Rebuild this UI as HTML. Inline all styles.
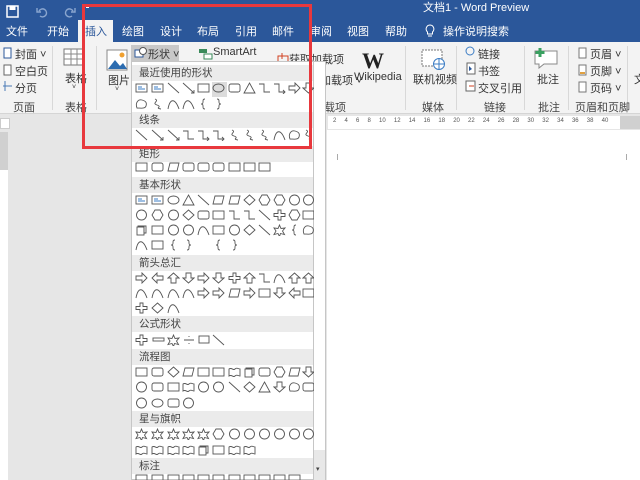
<!DOCTYPE html>
<html><head><meta charset="utf-8"><style>
*{margin:0;padding:0;box-sizing:border-box}
body{width:640px;height:480px;overflow:hidden;position:relative;background:#e6e6e6;font-family:"Liberation Sans","Noto Sans CJK SC",sans-serif;font-size:11px;color:#333}
.a{position:absolute;white-space:nowrap}
#title{left:0;top:0;width:640px;height:42px;background:#2b579a}
.tab{position:absolute;top:23px;color:#fff;font-size:11px}
#rib{left:0;top:42px;width:640px;height:72px;background:#f3f3f3;border-bottom:1px solid #d5d5d5}
.sep{position:absolute;top:46px;width:1px;height:64px;background:#d8d8d8}
.gl{position:absolute;top:99px;font-size:11px;color:#444}
.t{font-size:11px;color:#333}
#page{left:327px;top:130px;width:313px;height:350px;background:#fff}
#panel{left:131px;top:61px;width:183px;height:419px;background:#fff;border:1px solid #c6c6c6}
.hd{position:absolute;left:0;width:181px;height:16px;background:#ebebeb;font-size:10.5px;padding-left:7px;line-height:16px;color:#444}
#red{left:82px;top:4px;width:230px;height:145px;border:3px solid #e8383d}
</style></head><body>
<div class="a" id="title"></div>
<svg class="a" style="left:6px;top:5px" width="80" height="14"><rect x="1" y="1" width="11" height="11" fill="none" stroke="#fff" stroke-width="1.5"/><rect x="3.5" y="1" width="6" height="4" fill="#fff"/><path d="M33 6a4 4 0 1 1 1 5M31 3v4h4" fill="none" stroke="#8aa6cf" stroke-width="1.4"/><path d="M67 6a4 4 0 1 0 -1 5M69 3v4h-4" fill="none" stroke="#8aa6cf" stroke-width="1.4"/></svg>
<div class="a" style="left:86px;top:5px;width:3px;height:3px;background:#fff"></div>
<div class="a" style="left:423px;top:1px;color:#fff;font-size:11px;line-height:14px">文档1 - Word Preview</div>
<div class="a" style="left:78px;top:20px;width:35px;height:23px;background:#f3f3f3"></div>
<span class="tab" style="left:6px">文件</span><span class="tab" style="left:47px">开始</span><span class="tab" style="left:85px;color:#2b579a">插入</span><span class="tab" style="left:122px">绘图</span><span class="tab" style="left:160px">设计</span><span class="tab" style="left:197px">布局</span><span class="tab" style="left:235px">引用</span><span class="tab" style="left:272px">邮件</span><span class="tab" style="left:310px">审阅</span><span class="tab" style="left:347px">视图</span><span class="tab" style="left:385px">帮助</span>
<svg class="a" style="left:425px;top:24px" width="10" height="14"><path d="M5 1a4 4 0 0 0-2.5 7v2h5V8A4 4 0 0 0 5 1zM3 12h4" fill="none" stroke="#fff"/></svg>
<span class="tab" style="left:443px">操作说明搜索</span>
<div class="a" id="rib"></div>
<div class="sep" style="left:52px"></div><div class="sep" style="left:96px"></div><div class="sep" style="left:405px"></div><div class="sep" style="left:456px"></div><div class="sep" style="left:524px"></div><div class="sep" style="left:568px"></div><div class="sep" style="left:627px"></div>
<svg class="a" style="left:3px;top:47px" width="10" height="50"><rect x="1" y="1" width="7" height="10" fill="#fff" stroke="#2b579a"/><rect x="1" y="18" width="7" height="10" fill="#fff" stroke="#666"/><path d="M0 39h9M2 34v10" stroke="#4a7ab5"/></svg>
<span class="a t" style="left:15px;top:46px">封面 ˅</span><span class="a t" style="left:15px;top:63px">空白页</span><span class="a t" style="left:15px;top:80px">分页</span>
<span class="gl" style="left:13px">页面</span>
<svg class="a" style="left:63px;top:48px" width="22" height="18"><rect x="1" y="1" width="20" height="16" fill="#fff" stroke="#777"/><path d="M1 6h20M1 11h20M8 1v16M14 1v16" stroke="#888"/></svg>
<span class="a t" style="left:65px;top:70px">表格</span><span class="a" style="left:72px;top:84px;font-size:7px">˅</span><span class="gl" style="left:65px">表格</span>
<svg class="a" style="left:106px;top:49px" width="22" height="22"><rect x="1" y="1" width="20" height="20" fill="#fff" stroke="#888"/><path d="M2 20L9 11l5 6 3-3 4 6z" fill="#2b6cb0"/><circle cx="16" cy="6" r="2.5" fill="#f0a030"/></svg>
<span class="a t" style="left:108px;top:72px">图片</span><span class="a" style="left:115px;top:86px;font-size:7px">˅</span>
<div class="a" style="left:131px;top:45px;width:48px;height:16px;background:#c8c8c8"></div>
<svg class="a" style="left:134px;top:46px" width="14" height="13"><rect x="1" y="4" width="8" height="7" fill="#fff" stroke="#2b579a"/><circle cx="9" cy="5" r="3.5" fill="#fff" stroke="#555"/></svg>
<span class="a t" style="left:148px;top:46px">形状 ˅</span>
<svg class="a" style="left:199px;top:48px" width="14" height="12"><rect x="0" y="1" width="8" height="4" fill="#3a8a5a"/><rect x="5" y="6" width="8" height="5" fill="#fff" stroke="#3a8a5a"/></svg>
<span class="a t" style="left:213px;top:46px">SmartArt</span>
<svg class="a" style="left:277px;top:53px" width="12" height="12"><path d="M1 3h10v8H1zM5 0v6M2 3h6" fill="none" stroke="#d04020"/></svg>
<span class="a t" style="left:289px;top:51px">获取加载项</span><span class="a t" style="left:298px;top:72px">我的加载项 ˅</span>
<span class="gl" style="left:313px">加载项</span>
<div class="a" style="left:362px;top:48px;font-family:'Liberation Serif',serif;font-size:22px;font-weight:bold;color:#222">W</div>
<span class="a t" style="left:354px;top:71px">Wikipedia</span>
<svg class="a" style="left:421px;top:49px" width="26" height="22"><rect x="1" y="1" width="20" height="16" fill="#fff" stroke="#777" stroke-dasharray="2 1"/><circle cx="18" cy="15" r="5.5" fill="#fff" stroke="#3b7cc4"/><path d="M12.5 15h11M18 9.5v11" stroke="#3b7cc4"/></svg>
<span class="a t" style="left:413px;top:71px">联机视频</span><span class="gl" style="left:422px">媒体</span>
<svg class="a" style="left:465px;top:46px" width="12" height="50"><circle cx="5" cy="5" r="4" fill="none" stroke="#3b7cc4"/><rect x="2" y="17" width="8" height="11" fill="#fff" stroke="#666"/><path d="M4 20v5l3-2z" fill="#2b579a"/><rect x="1" y="35" width="9" height="10" fill="#fff" stroke="#666"/><path d="M4 40h5" stroke="#d04020"/></svg>
<span class="a t" style="left:478px;top:46px">链接</span><span class="a t" style="left:478px;top:63px">书签</span><span class="a t" style="left:478px;top:80px">交叉引用</span>
<span class="gl" style="left:484px">链接</span>
<svg class="a" style="left:534px;top:47px" width="24" height="22"><path d="M1 4h22v13H10l-5 4v-4H1z" fill="#fff" stroke="#888"/><path d="M6 1v9M1.5 5.5h9" stroke="#3aa060" stroke-width="3"/></svg>
<span class="a t" style="left:537px;top:71px">批注</span><span class="gl" style="left:538px">批注</span>
<svg class="a" style="left:578px;top:47px" width="10" height="48"><rect x="1" y="1" width="7" height="10" fill="#fff" stroke="#777"/><rect x="1" y="18" width="7" height="10" fill="#fff" stroke="#777"/><path d="M2 26h5" stroke="#e0a040" stroke-width="2"/><rect x="1" y="35" width="7" height="10" fill="#fff" stroke="#777"/></svg>
<span class="a t" style="left:590px;top:46px">页眉 ˅</span><span class="a t" style="left:590px;top:63px">页脚 ˅</span><span class="a t" style="left:590px;top:80px">页码 ˅</span>
<span class="gl" style="left:575px">页眉和页脚</span>
<span class="a t" style="left:634px;top:71px">文</span>
<!-- ruler -->
<div class="a" style="left:0;top:118px;width:10px;height:11px;background:#fff;border:1px solid #ccc"></div>
<div class="a" style="left:0;top:132px;width:8px;height:38px;background:#d0d0d0"></div>
<div class="a" style="left:0;top:170px;width:8px;height:310px;background:#fff"></div>
<div class="a" style="left:328px;top:116px;width:312px;height:13px;background:#fff"></div>
<div class="a" style="left:620px;top:116px;width:20px;height:13px;background:#d0d0d0"></div>
<div class="a" style="left:333px;top:118px;font-size:6px;color:#555;word-spacing:6.5px">2 4 6 8 10 12 14 16 18 20 22 24 26 28 30 32 34 36 38 40</div>
<div class="a" id="page"></div>
<div class="a" style="left:337px;top:154px;width:1px;height:6px;background:#aaa"></div>
<div class="a" style="left:626px;top:154px;width:1px;height:6px;background:#aaa"></div>
<!-- panel -->
<div class="a" id="panel">
<div class="hd" style="top:3px">最近使用的形状</div>
<div class="hd" style="top:50px">线条</div>
<div class="hd" style="top:84px">矩形</div>
<div class="hd" style="top:115px">基本形状</div>
<div class="hd" style="top:193px">箭头总汇</div>
<div class="hd" style="top:254px">公式形状</div>
<div class="hd" style="top:287px">流程图</div>
<div class="hd" style="top:349px">星与旗帜</div>
<div class="hd" style="top:396px">标注</div>
<div class="a" style="left:80px;top:20px;width:15px;height:15px;background:#dcdcdc"></div>
</div>
<div class="a" style="left:313px;top:61px;width:13px;height:419px;background:#fff;border:1px solid #c6c6c6"></div>
<div class="a" style="left:314px;top:450px;width:11px;height:30px;background:#e8e8e8"></div>
<div class="a" style="left:316px;top:465px;font-size:7px;color:#444">▾</div>
<svg class="a" style="left:131px;top:61px" width="183" height="419" fill="none" stroke="#555" stroke-width="0.9">
<defs>
<symbol id="R" viewBox="0 0 13 12"><rect x="1" y="2" width="11" height="8"/></symbol>
<symbol id="RR" viewBox="0 0 13 12"><rect x="1" y="2" width="11" height="8" rx="2"/></symbol>
<symbol id="E" viewBox="0 0 13 12"><ellipse cx="6.5" cy="6" rx="5.5" ry="4"/></symbol>
<symbol id="C" viewBox="0 0 13 12"><circle cx="6.5" cy="6" r="5"/></symbol>
<symbol id="T" viewBox="0 0 13 12"><path d="M6.5 1L12 11H1z"/></symbol>
<symbol id="L" viewBox="0 0 13 12"><path d="M1 1L12 11"/></symbol>
<symbol id="LA" viewBox="0 0 13 12"><path d="M1 1L12 11M9 11h3V8"/></symbol>
<symbol id="EL" viewBox="0 0 13 12"><path d="M1 2h5v8h6"/></symbol>
<symbol id="ELA" viewBox="0 0 13 12"><path d="M1 2h5v8h6M10 8l2 2-2 2"/></symbol>
<symbol id="AR" viewBox="0 0 13 12"><path d="M1 4h6V1l5 5-5 5V8H1z"/></symbol>
<symbol id="AL" viewBox="0 0 13 12"><path d="M12 4H6V1L1 6l5 5V8h6z"/></symbol>
<symbol id="AU" viewBox="0 0 13 12"><path d="M4 11V6H1l5.5-5L12 6H9v5z"/></symbol>
<symbol id="AD" viewBox="0 0 13 12"><path d="M4 1v5H1l5.5 5L12 6H9V1z"/></symbol>
<symbol id="D" viewBox="0 0 13 12"><path d="M6.5 1L12 6 6.5 11 1 6z"/></symbol>
<symbol id="H" viewBox="0 0 13 12"><path d="M4 1h5l3 5-3 5H4L1 6z"/></symbol>
<symbol id="P" viewBox="0 0 13 12"><path d="M3 2h9L10 10H1z"/></symbol>
<symbol id="TB" viewBox="0 0 13 12"><rect x="1" y="2" width="11" height="8"/><path d="M3 5h4M3 7h7" stroke="#3b7cc4"/></symbol>
<symbol id="BR" viewBox="0 0 13 12"><path d="M8 1c-2 0-2 1-2 3S5 6 4 6c1 0 2 0 2 2s0 3 2 3"/></symbol>
<symbol id="BR2" viewBox="0 0 13 12"><path d="M5 1c2 0 2 1 2 3s1 2 2 2c-1 0-2 0-2 2s0 3-2 3"/></symbol>
<symbol id="CV" viewBox="0 0 13 12"><path d="M1 11C3 0 8 0 12 11"/></symbol>
<symbol id="ZZ" viewBox="0 0 13 12"><path d="M4 1c5 2-4 4 2 6s-3 3 4 4"/></symbol>
<symbol id="FR" viewBox="0 0 13 12"><path d="M2 10C0 5 3 1 7 2s5 3 4 6-5 2-9 2z"/></symbol>
<symbol id="ST" viewBox="0 0 13 12"><path d="M6.5 1l1.5 3.5 4-.5-2.5 3 2 3.5-4-1-1 3-1.5-3-4 1 2-3.5L1 4l4 .5z"/></symbol>
<symbol id="PL" viewBox="0 0 13 12"><path d="M5 1h3v3.5h4v3H8V11H5V7.5H1v-3h4z"/></symbol>
<symbol id="FL" viewBox="0 0 13 12"><path d="M1 3c3-2 4 2 6 0s3 0 5 0v7c-2 0-3-2-5 0s-3-2-6 0z"/></symbol>
<symbol id="CU" viewBox="0 0 13 12"><path d="M3 2h8v7H9V3H3z"/><rect x="2" y="3" width="7" height="8"/></symbol>
<symbol id="CL" viewBox="0 0 13 12"><rect x="1" y="1" width="11" height="7"/><path d="M3 8l-1 3 4-3"/></symbol>
</defs>
<use href="#TB" x="4" y="21" width="13" height="12"/><use href="#TB" x="20" y="21" width="13" height="12"/><use href="#L" x="36" y="21" width="13" height="12"/><use href="#LA" x="51" y="21" width="13" height="12"/><use href="#R" x="66" y="21" width="13" height="12"/><use href="#E" x="81" y="21" width="13" height="12"/><use href="#RR" x="97" y="21" width="13" height="12"/><use href="#T" x="112" y="21" width="13" height="12"/><use href="#EL" x="127" y="21" width="13" height="12"/><use href="#ELA" x="142" y="21" width="13" height="12"/><use href="#AR" x="157" y="21" width="13" height="12"/><use href="#AD" x="171" y="21" width="13" height="12"/>
<use href="#FR" x="4" y="37" width="13" height="12"/><use href="#ZZ" x="20" y="37" width="13" height="12"/><use href="#CV" x="36" y="37" width="13" height="12"/><use href="#CV" x="51" y="37" width="13" height="12"/><use href="#BR" x="66" y="37" width="13" height="12"/><use href="#BR2" x="81" y="37" width="13" height="12"/>
<use href="#L" x="4" y="68" width="13" height="12"/><use href="#LA" x="20" y="68" width="13" height="12"/><use href="#LA" x="36" y="68" width="13" height="12"/><use href="#EL" x="51" y="68" width="13" height="12"/><use href="#ELA" x="66" y="68" width="13" height="12"/><use href="#ELA" x="81" y="68" width="13" height="12"/><use href="#ZZ" x="97" y="68" width="13" height="12"/><use href="#ZZ" x="112" y="68" width="13" height="12"/><use href="#ZZ" x="127" y="68" width="13" height="12"/><use href="#CV" x="142" y="68" width="13" height="12"/><use href="#FR" x="157" y="68" width="13" height="12"/><use href="#ZZ" x="171" y="68" width="13" height="12"/>
<use href="#R" x="4" y="100" width="13" height="12"/><use href="#RR" x="20" y="100" width="13" height="12"/><use href="#P" x="36" y="100" width="13" height="12"/><use href="#RR" x="51" y="100" width="13" height="12"/><use href="#RR" x="66" y="100" width="13" height="12"/><use href="#RR" x="81" y="100" width="13" height="12"/><use href="#R" x="97" y="100" width="13" height="12"/><use href="#R" x="112" y="100" width="13" height="12"/><use href="#R" x="127" y="100" width="13" height="12"/>
<use href="#TB" x="4" y="133" width="13" height="12"/><use href="#TB" x="20" y="133" width="13" height="12"/><use href="#E" x="36" y="133" width="13" height="12"/><use href="#T" x="51" y="133" width="13" height="12"/><use href="#L" x="66" y="133" width="13" height="12"/><use href="#P" x="81" y="133" width="13" height="12"/><use href="#P" x="97" y="133" width="13" height="12"/><use href="#D" x="112" y="133" width="13" height="12"/><use href="#H" x="127" y="133" width="13" height="12"/><use href="#H" x="142" y="133" width="13" height="12"/><use href="#C" x="157" y="133" width="13" height="12"/><use href="#C" x="171" y="133" width="13" height="12"/>
<use href="#C" x="4" y="148" width="13" height="12"/><use href="#H" x="20" y="148" width="13" height="12"/><use href="#C" x="36" y="148" width="13" height="12"/><use href="#D" x="51" y="148" width="13" height="12"/><use href="#RR" x="66" y="148" width="13" height="12"/><use href="#R" x="81" y="148" width="13" height="12"/><use href="#EL" x="97" y="148" width="13" height="12"/><use href="#EL" x="112" y="148" width="13" height="12"/><use href="#L" x="127" y="148" width="13" height="12"/><use href="#PL" x="142" y="148" width="13" height="12"/><use href="#H" x="157" y="148" width="13" height="12"/><use href="#R" x="171" y="148" width="13" height="12"/>
<use href="#CU" x="4" y="163" width="13" height="12"/><use href="#R" x="20" y="163" width="13" height="12"/><use href="#C" x="36" y="163" width="13" height="12"/><use href="#C" x="51" y="163" width="13" height="12"/><use href="#CV" x="66" y="163" width="13" height="12"/><use href="#R" x="81" y="163" width="13" height="12"/><use href="#C" x="97" y="163" width="13" height="12"/><use href="#D" x="112" y="163" width="13" height="12"/><use href="#L" x="127" y="163" width="13" height="12"/><use href="#ST" x="142" y="163" width="13" height="12"/><use href="#BR" x="157" y="163" width="13" height="12"/><use href="#FR" x="171" y="163" width="13" height="12"/>
<use href="#CV" x="4" y="178" width="13" height="12"/><use href="#R" x="20" y="178" width="13" height="12"/><use href="#BR" x="36" y="178" width="13" height="12"/><use href="#BR2" x="51" y="178" width="13" height="12"/><use href="#BR" x="81" y="178" width="13" height="12"/><use href="#BR2" x="97" y="178" width="13" height="12"/>
<use href="#AR" x="4" y="211" width="13" height="12"/><use href="#AL" x="20" y="211" width="13" height="12"/><use href="#AU" x="36" y="211" width="13" height="12"/><use href="#AD" x="51" y="211" width="13" height="12"/><use href="#AR" x="66" y="211" width="13" height="12"/><use href="#AD" x="81" y="211" width="13" height="12"/><use href="#PL" x="97" y="211" width="13" height="12"/><use href="#AU" x="112" y="211" width="13" height="12"/><use href="#EL" x="127" y="211" width="13" height="12"/><use href="#CV" x="142" y="211" width="13" height="12"/><use href="#AU" x="157" y="211" width="13" height="12"/><use href="#AU" x="171" y="211" width="13" height="12"/>
<use href="#CV" x="4" y="226" width="13" height="12"/><use href="#CV" x="20" y="226" width="13" height="12"/><use href="#CV" x="36" y="226" width="13" height="12"/><use href="#CV" x="51" y="226" width="13" height="12"/><use href="#AR" x="66" y="226" width="13" height="12"/><use href="#AR" x="81" y="226" width="13" height="12"/><use href="#P" x="97" y="226" width="13" height="12"/><use href="#AR" x="112" y="226" width="13" height="12"/><use href="#R" x="127" y="226" width="13" height="12"/><use href="#AD" x="142" y="226" width="13" height="12"/><use href="#AL" x="157" y="226" width="13" height="12"/><use href="#R" x="171" y="226" width="13" height="12"/>
<use href="#PL" x="4" y="241" width="13" height="12"/><use href="#D" x="20" y="241" width="13" height="12"/><use href="#CV" x="36" y="241" width="13" height="12"/>
<use href="#PL" x="4" y="273" width="13" height="12"/><rect x="22" y="277" width="11" height="3"/><use href="#ST" x="36" y="273" width="13" height="12"/><path d="M53 279h10M58 275v1M58 282v1"/><rect x="68" y="275" width="10" height="7"/><use href="#L" x="81" y="273" width="13" height="12"/>
<use href="#R" x="4" y="305" width="13" height="12"/><use href="#RR" x="20" y="305" width="13" height="12"/><use href="#D" x="36" y="305" width="13" height="12"/><use href="#P" x="51" y="305" width="13" height="12"/><use href="#R" x="66" y="305" width="13" height="12"/><use href="#R" x="81" y="305" width="13" height="12"/><use href="#FL" x="97" y="305" width="13" height="12"/><use href="#CU" x="112" y="305" width="13" height="12"/><use href="#RR" x="127" y="305" width="13" height="12"/><use href="#H" x="142" y="305" width="13" height="12"/><use href="#P" x="157" y="305" width="13" height="12"/><use href="#AD" x="171" y="305" width="13" height="12"/>
<use href="#C" x="4" y="320" width="13" height="12"/><use href="#RR" x="20" y="320" width="13" height="12"/><use href="#R" x="36" y="320" width="13" height="12"/><use href="#FL" x="51" y="320" width="13" height="12"/><use href="#C" x="66" y="320" width="13" height="12"/><use href="#C" x="81" y="320" width="13" height="12"/><use href="#L" x="97" y="320" width="13" height="12"/><use href="#D" x="112" y="320" width="13" height="12"/><use href="#T" x="127" y="320" width="13" height="12"/><use href="#AD" x="142" y="320" width="13" height="12"/><use href="#FR" x="157" y="320" width="13" height="12"/><use href="#RR" x="171" y="320" width="13" height="12"/>
<use href="#C" x="4" y="336" width="13" height="12"/><use href="#E" x="20" y="336" width="13" height="12"/><use href="#RR" x="36" y="336" width="13" height="12"/><use href="#C" x="51" y="336" width="13" height="12"/>
<use href="#ST" x="4" y="367" width="13" height="12"/><use href="#ST" x="20" y="367" width="13" height="12"/><use href="#ST" x="36" y="367" width="13" height="12"/><use href="#ST" x="51" y="367" width="13" height="12"/><use href="#ST" x="66" y="367" width="13" height="12"/><use href="#H" x="81" y="367" width="13" height="12"/><use href="#C" x="97" y="367" width="13" height="12"/><use href="#C" x="112" y="367" width="13" height="12"/><use href="#C" x="127" y="367" width="13" height="12"/><use href="#C" x="142" y="367" width="13" height="12"/><use href="#C" x="157" y="367" width="13" height="12"/><use href="#C" x="171" y="367" width="13" height="12"/>
<use href="#FL" x="4" y="383" width="13" height="12"/><use href="#FL" x="20" y="383" width="13" height="12"/><use href="#FL" x="36" y="383" width="13" height="12"/><use href="#FL" x="51" y="383" width="13" height="12"/><use href="#CU" x="66" y="383" width="13" height="12"/><use href="#R" x="81" y="383" width="13" height="12"/><use href="#FL" x="97" y="383" width="13" height="12"/><use href="#FL" x="112" y="383" width="13" height="12"/>
<use href="#CL" x="4" y="413" width="13" height="12"/><use href="#CL" x="20" y="413" width="13" height="12"/><use href="#CL" x="36" y="413" width="13" height="12"/><use href="#CL" x="51" y="413" width="13" height="12"/><use href="#CL" x="66" y="413" width="13" height="12"/><use href="#CL" x="81" y="413" width="13" height="12"/><use href="#CL" x="97" y="413" width="13" height="12"/><use href="#CL" x="112" y="413" width="13" height="12"/><use href="#CL" x="127" y="413" width="13" height="12"/><use href="#CL" x="142" y="413" width="13" height="12"/><use href="#CL" x="157" y="413" width="13" height="12"/>
</svg>
<div class="a" id="red"></div>
</body></html>
